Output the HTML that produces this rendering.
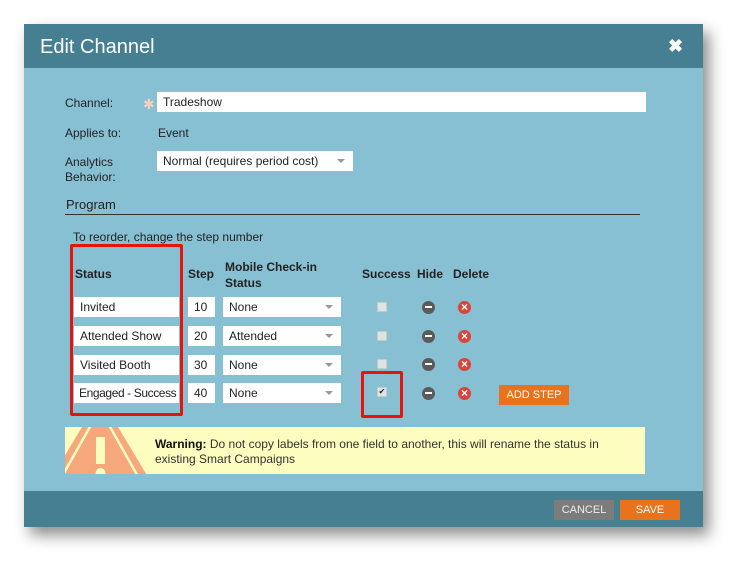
<!DOCTYPE html><html><head><style>
body{margin:0;width:750px;height:575px;background:#fff;position:relative;font-family:"Liberation Sans",sans-serif;font-size:12px;color:#222;overflow:hidden}
.a{position:absolute}
.dlg{left:24px;top:24px;width:679px;height:503px;background:#87c0d3;box-shadow:6px 8px 14px rgba(0,0,0,.45)}
.hd{left:24px;top:24px;width:679px;height:44px;background:#467f91}
.ft{left:24px;top:491px;width:679px;height:36px;background:#467f91}
.in{background:#fff;height:20px;line-height:21px;padding-left:6px;box-sizing:border-box;font-size:12px;white-space:nowrap;overflow:hidden}
.arr{position:absolute;right:8px;top:8px;border-left:4px solid transparent;border-right:4px solid transparent;border-top:4px solid #999}
.b{font-weight:bold}
.cb{width:8px;height:8px;background:#dfe4e2;border:1px solid #c5cbc9}
.hide{width:13px;height:13px;border-radius:50%;background:#5b5b5b}
.hide:after{content:"";position:absolute;left:3px;top:5px;width:7px;height:2px;background:#fff}
.del{width:13px;height:13px;border-radius:50%;background:#d9453a;color:#fff;font-size:12px;line-height:13px;text-align:center;font-weight:bold}
.btn{color:#fff;text-align:center;line-height:20px;font-size:11px}
</style></head><body>
<div class="a dlg"></div><div class="a hd"></div><div class="a ft"></div>
<div class="a" style="left:40px;top:36px;font-size:20px;color:#fff">Edit Channel</div>
<div class="a" style="left:668px;top:36px;font-size:18px;color:#fff;font-weight:bold">✖</div>
<div class="a" style="left:65px;top:96px">Channel:</div>
<div class="a" style="left:143px;top:96px;color:#f3d0c0;font-size:14px">✱</div>
<div class="a in" style="left:157px;top:92px;width:489px">Tradeshow</div>
<div class="a" style="left:65px;top:126px">Applies to:</div>
<div class="a" style="left:158px;top:126px">Event</div>
<div class="a" style="left:65px;top:155px;line-height:15px">Analytics<br>Behavior:</div>
<div class="a in" style="left:157px;top:151px;width:196px">Normal (requires period cost)<span class="arr"></span></div>
<div class="a" style="left:66px;top:197px;font-size:13px">Program</div>
<div class="a" style="left:65px;top:214px;width:575px;height:1px;background:#333"></div>
<div class="a" style="left:73px;top:230px">To reorder, change the step number</div>
<div class="a b" style="left:75px;top:267px">Status</div>
<div class="a b" style="left:188px;top:267px">Step</div>
<div class="a b" style="left:225px;top:259px;line-height:16px">Mobile Check-in<br>Status</div>
<div class="a b" style="left:362px;top:267px">Success</div>
<div class="a b" style="left:417px;top:267px">Hide</div>
<div class="a b" style="left:453px;top:267px">Delete</div>

<div class="a in" style="left:74px;top:297px;width:105px">Invited</div>
<div class="a in" style="left:188px;top:297px;width:27px">10</div>
<div class="a in" style="left:223px;top:297px;width:118px">None<span class="arr"></span></div>
<div class="a in" style="left:74px;top:326px;width:105px">Attended Show</div>
<div class="a in" style="left:188px;top:326px;width:27px">20</div>
<div class="a in" style="left:223px;top:326px;width:118px">Attended<span class="arr"></span></div>
<div class="a in" style="left:74px;top:355px;width:105px">Visited Booth</div>
<div class="a in" style="left:188px;top:355px;width:27px">30</div>
<div class="a in" style="left:223px;top:355px;width:118px">None<span class="arr"></span></div>
<div class="a in" style="left:74px;top:383px;width:105px;padding-left:5px;letter-spacing:-0.4px">Engaged - Success</div>
<div class="a in" style="left:188px;top:383px;width:27px">40</div>
<div class="a in" style="left:223px;top:383px;width:118px">None<span class="arr"></span></div>

<div class="a cb" style="left:377px;top:302px"></div>
<div class="a cb" style="left:377px;top:331px"></div>
<div class="a cb" style="left:377px;top:359px"></div>
<div class="a cb" style="left:377px;top:387px;font-size:8px;line-height:8px;text-align:center">✔</div>
<div class="a hide" style="left:422px;top:301px"></div>
<div class="a hide" style="left:422px;top:330px"></div>
<div class="a hide" style="left:422px;top:358px"></div>
<div class="a hide" style="left:422px;top:387px"></div>
<div class="a del" style="left:458px;top:301px">×</div>
<div class="a del" style="left:458px;top:330px">×</div>
<div class="a del" style="left:458px;top:358px">×</div>
<div class="a del" style="left:458px;top:387px">×</div>
<div class="a btn" style="left:499px;top:385px;width:70px;height:20px;background:#e8731c">ADD STEP</div>

<div class="a" style="left:70px;top:244px;width:107px;height:166px;border:3px solid #e8140c;border-radius:2px"></div>
<div class="a" style="left:361px;top:371px;width:36px;height:41px;border:3px solid #e8140c;border-radius:2px"></div>

<div class="a" style="left:65px;top:427px;width:580px;height:47px;background:#fdfdbf;overflow:hidden">
<svg class="a" style="left:0;top:0" width="90" height="47"><polygon points="35,-30 -25,70 95,70" fill="#f7a77c"/><polygon points="35,-18 -10,62 80,62" fill="none" stroke="#fdfdbf" stroke-width="2.5"/><rect x="31" y="10" width="9" height="27" fill="#fdfdbf"/><circle cx="35.5" cy="46" r="5" fill="#fdfdbf"/></svg>
<div class="a" style="left:90px;top:10px;line-height:15px;color:#333"><b style="color:#111">Warning:</b> Do not copy labels from one field to another, this will rename the status in<br>existing Smart Campaigns</div>
</div>
<div class="a btn" style="left:554px;top:500px;width:60px;height:20px;background:#7c7c7c;color:#eee">CANCEL</div>
<div class="a btn" style="left:620px;top:500px;width:60px;height:20px;background:#e8731c">SAVE</div>
</body></html>
